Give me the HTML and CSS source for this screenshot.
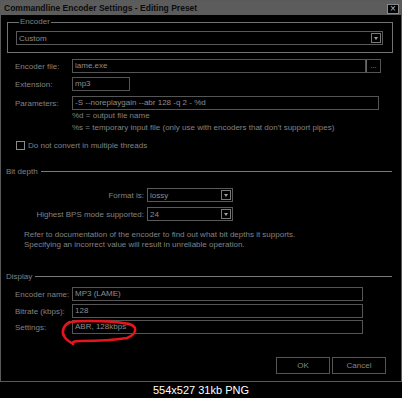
FILE: index.html
```
<!DOCTYPE html>
<html>
<head>
<meta charset="utf-8">
<link rel="stylesheet" href="styles.css">
</head>
<body>
<div class="window">
  <div class="titlebar">
    <span class="title">Commandline Encoder Settings - Editing Preset</span>
    <span class="close">×</span>
  </div>
  <div class="content">
    <fieldset class="group">
      <legend>Encoder</legend>
      <div class="select wide"><span class="val">Custom</span><span class="arrow"></span></div>
    </fieldset>

    <div class="row r-file"><span class="lbl">Encoder file:</span><div class="input w-file">lame.exe</div><div class="browse">...</div></div>
    <div class="row r-ext"><span class="lbl">Extension:</span><div class="input w-ext">mp3</div></div>
    <div class="row r-par"><span class="lbl">Parameters:</span><div class="input w-par">-S --noreplaygain --abr 128 -q 2 - %d</div></div>
    <div class="hint">
      <div>%d = output file name</div>
      <div>%s = temporary input file (only use with encoders that don't support pipes)</div>
    </div>
    <div class="check"><span class="box"></span><span>Do not convert in multiple threads</span></div>

    <div class="section s-bit"><span>Bit depth</span><span class="line"></span></div>
    <div class="brow b-fmt"><span class="blbl">Format is:</span><div class="select small"><span class="val">lossy</span><span class="arrow"></span></div></div>
    <div class="brow b-bps"><span class="blbl">Highest BPS mode supported:</span><div class="select small"><span class="val">24</span><span class="arrow"></span></div></div>
    <div class="note">
      <div>Refer to documentation of the encoder to find out what bit depths it supports.</div>
      <div>Specifying an incorrect value will result in unreliable operation.</div>
    </div>

    <div class="section s-disp"><span>Display</span><span class="line"></span></div>
    <div class="row r-name"><span class="lbl">Encoder name:</span><div class="input w-disp">MP3 (LAME)</div></div>
    <div class="row r-bit"><span class="lbl">Bitrate (kbps):</span><div class="input w-disp">128</div></div>
    <div class="row r-set"><span class="lbl">Settings:</span><div class="input w-disp">ABR, 128kbps</div></div>

    <div class="buttons"><div class="btn">OK</div><div class="btn">Cancel</div></div>
  </div>
  <svg class="scribble" width="402" height="382" viewBox="0 0 402 382">
    <path d="M70 322 C64 325 61 331 64 336 C66 340 70 342 73 344 C72 342 74 341 80 341 C95 341 115 340 127 338 C133 336 136 332 135 328 C133 324 126 323 115 322 C100 321 85 320 72 322" fill="none" stroke="#e8141b" stroke-width="2.6" stroke-linecap="round" stroke-linejoin="round"/>
  </svg>
</div>
<div class="caption">554x527 31kb PNG</div>
</body>
</html>
```
FILE: styles.css
```
html, body {
  margin: 0;
  padding: 0;
  background: #000;
}
body {
  width: 402px;
  height: 398px;
  overflow: hidden;
  font-family: "Liberation Sans", Arial, sans-serif;
  font-size: 8px;
  color: #828282;
}
.window {
  box-sizing: border-box;
  width: 402px;
  height: 382px;
  border: 1px solid #5a5a5a;
  position: relative;
}
.titlebar {
  height: 14px;
  background: #5c5c5c;
  display: flex;
  align-items: center;
  justify-content: space-between;
  padding: 0 2px 0 3px;
}
.title {
  font-weight: bold;
  font-size: 8.5px;
  color: #0c0c0c;
}
.close {
  box-sizing: border-box;
  width: 12px;
  height: 10px;
  border: 1px solid #8a8a8a;
  background: #000;
  color: #b5b5b5;
  font-size: 10px;
  line-height: 8px;
  text-align: center;
  margin-top: 2px;
}
.content {
  display: flex;
  flex-direction: column;
  align-items: flex-start;
}
.group {
  align-self: stretch;
  margin: 2px 8px 0 6px;
  padding: 4px 9px 7px 8px;
  border: 1px solid #727272;
  min-width: 0;
}
.group legend {
  padding: 0 1px;
  margin-left: 3px;
  line-height: 10px;
  color: #828282;
}
.select {
  box-sizing: border-box;
  height: 14px;
  border: 1px solid #5a5a5a;
  display: flex;
  align-items: center;
  justify-content: space-between;
  padding: 0 1px 0 2px;
  color: #8c8c8c;
}
.select.wide { width: 100%; }
.select.small { width: 86px; }
.arrow {
  box-sizing: border-box;
  width: 10px;
  height: 10px;
  border: 1px solid #7a7a7a;
  display: flex;
  align-items: center;
  justify-content: center;
}
.arrow::after {
  content: "";
  border-left: 2.5px solid transparent;
  border-right: 2.5px solid transparent;
  border-top: 3px solid #a0a0a0;
}
.row {
  display: flex;
  align-items: center;
  padding-left: 14px;
}
.lbl {
  width: 57px;
  flex: none;
}
.input {
  box-sizing: border-box;
  height: 14px;
  border: 1px solid #555;
  padding: 0 2px;
  line-height: 12px;
  color: #8e8e8e;
  white-space: nowrap;
}
.browse {
  box-sizing: border-box;
  width: 15px;
  height: 14px;
  border: 1px solid #555;
  border-left-color: #666;
  text-align: center;
  line-height: 12px;
  color: #8e8e8e;
}
.w-file { width: 294px; }
.w-ext { width: 58px; }
.w-par { width: 307px; }
.w-disp { width: 291px; }
.r-file { margin-top: 6px; }
.r-ext { margin-top: 4px; }
.r-par { margin-top: 5px; }
.hint {
  padding-left: 71px;
  line-height: 11.5px;
}
.check {
  display: flex;
  align-items: center;
  margin-top: 7px;
  padding-left: 15px;
  height: 10px;
}
.box {
  box-sizing: border-box;
  width: 9px;
  height: 9px;
  border: 1px solid #8a8a8a;
  margin-right: 3px;
}
.section {
  align-self: stretch;
  display: flex;
  align-items: center;
  height: 10px;
  padding-left: 5px;
  margin-right: 9px;
}
.section .line {
  flex: 1;
  height: 1px;
  background: #7a7a7a;
  margin-left: 3px;
}
.s-bit { margin-top: 16px; }
.brow {
  display: flex;
  align-items: center;
}
.blbl {
  box-sizing: border-box;
  width: 146px;
  text-align: right;
  padding-right: 3px;
}
.b-fmt { margin-top: 12px; }
.b-bps { margin-top: 5px; }
.note {
  margin-top: 9px;
  padding-left: 23px;
  line-height: 9.5px;
}
.s-disp { margin-top: 22px; }
.r-name { margin-top: 6px; }
.r-bit { margin-top: 3px; }
.r-set { margin-top: 2px; }
.buttons {
  align-self: flex-end;
  display: flex;
  gap: 2px;
  margin-top: 23px;
  margin-right: 15px;
}
.btn {
  box-sizing: border-box;
  width: 54px;
  height: 17px;
  border: 1px solid #555;
  text-align: center;
  line-height: 15px;
  color: #858585;
}
.scribble {
  position: absolute;
  left: -1px;
  top: -1px;
  pointer-events: none;
}
.caption {
  height: 16px;
  line-height: 16px;
  text-align: center;
  color: #fff;
  font-size: 11px;
}
```
